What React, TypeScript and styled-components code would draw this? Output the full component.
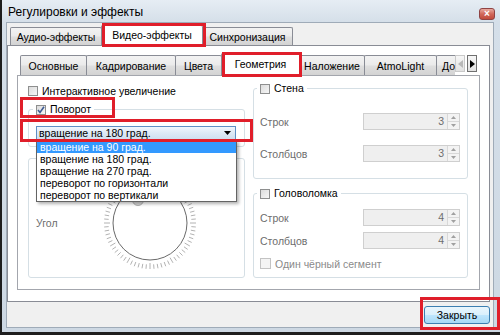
import styled, { createGlobalStyle } from "styled-components";

const GlobalStyle = createGlobalStyle`
  html, body { margin: 0; padding: 0; background: #fff; }
  body {
    font-family: "Liberation Sans", Arial, sans-serif;
    font-size: 10.5px;
    color: #000;
  }
`;

const Window = styled.div`
  position: relative;
  width: 500px;
  height: 335px;
  box-sizing: border-box;
  background: linear-gradient(#e6edf4, #d5dfe9 22px, #cdd8e3);
  border-left: 2px solid #1e1e1e;
  border-bottom: 3px solid #1e1e1e;
  padding: 0 6px 4px 4px;
  display: flex;
  flex-direction: column;
  overflow: hidden;
`;

const TitleBar = styled.div`
  height: 22px;
  display: flex;
  align-items: flex-start;
  justify-content: space-between;
  padding-left: 2px;
`;

const Title = styled.span`
  font-size: 12px;
  line-height: 22px;
  margin-top: 1px;
`;

const TitleClose = styled.div`
  width: 16px;
  height: 12px;
  margin: 8px -1px 0 0;
  box-sizing: border-box;
  border: 1px solid #8f4343;
  border-radius: 3px;
  background: linear-gradient(#e9a99f, #d0675a 50%, #c24a3b);
  color: #fff;
  font-size: 10px;
  font-weight: bold;
  line-height: 10px;
  text-align: center;
`;

const Client = styled.div`
  flex: 1;
  background: #f0f0f0;
  border: 1px solid #9fabb8;
  padding: 2px 3px 0 0;
  display: flex;
  flex-direction: column;
`;

const TabStrip = styled.div<{ $h: number; $pl: number }>`
  position: relative;
  z-index: 1;
  height: ${(p) => p.$h}px;
  margin-bottom: -1px;
  padding-left: ${(p) => p.$pl}px;
  display: flex;
  align-items: flex-start;
`;

const Tab = styled.div<{ $w?: number; $active?: boolean; $h: number }>`
  position: relative;
  box-sizing: border-box;
  width: ${(p) => (p.$w ? `${p.$w}px` : "auto")};
  padding-left: ${(p) => (p.$w ? 0 : 5)}px;
  padding-right: ${(p) => (p.$w ? 0 : 5)}px;
  flex: none;
  height: ${(p) => (p.$active ? p.$h : p.$h - 3)}px;
  margin-top: ${(p) => (p.$active ? 0 : 2)}px;
  margin-left: -1px;
  border: 1px solid #898c95;
  border-bottom: none;
  border-radius: 2px 2px 0 0;
  background: ${(p) =>
    p.$active
      ? "#fff"
      : "linear-gradient(#f3f3f3, #ebebeb 45%, #dedede 55%, #d3d3d3)"};
  z-index: ${(p) => (p.$active ? 2 : 1)};
  display: flex;
  align-items: center;
  justify-content: center;
  white-space: nowrap;
  padding-bottom: ${(p) => (p.$active ? 2 : 0)}px;

  &:first-child { margin-left: 0; }
`;

const OuterPane = styled.div`
  height: 257px;
  box-sizing: border-box;
  background: #fff;
  border: 1px solid #898c95;
  padding: 7px 9px 11px 9px;
  display: flex;
  flex-direction: column;
`;

const TabList = styled.div`
  width: 435px;
  height: 23px;
  overflow: hidden;
  display: flex;
  align-items: flex-start;
`;

const ScrollArrows = styled.div`
  display: flex;
  gap: 2px;
  margin-top: 2px;
`;

const ArrowBtn = styled.div<{ $dim?: boolean }>`
  width: 10px;
  height: 17px;
  box-sizing: border-box;
  border: 1px solid ${(p) => (p.$dim ? "#c9c9c9" : "#707070")};
  background: linear-gradient(#f7f7f7, #e2e2e2);
  display: flex;
  align-items: center;
  justify-content: center;
`;

const InnerPane = styled.div`
  height: 215px;
  box-sizing: border-box;
  border: 1px solid #a3a6ad;
  background: #fff;
  display: flex;
  gap: 8px;
  padding: 0 11px 0 10px;
`;

const Column = styled.div<{ $w: number; $pt: number }>`
  width: ${(p) => p.$w}px;
  padding-top: ${(p) => p.$pt}px;
  display: flex;
  flex-direction: column;
`;

const CheckRow = styled.div<{ $disabled?: boolean; $mt?: number }>`
  height: 13px;
  margin-top: ${(p) => p.$mt ?? 0}px;
  display: flex;
  align-items: center;
  gap: 4px;
  color: ${(p) => (p.$disabled ? "#8a8a8a" : "#000")};
  white-space: nowrap;
`;

const Box = styled.span<{ $size?: number; $disabled?: boolean }>`
  position: relative;
  width: ${(p) => p.$size ?? 10}px;
  height: ${(p) => p.$size ?? 10}px;
  box-sizing: border-box;
  flex: none;
  border: 1px solid ${(p) => (p.$disabled ? "#c3c3c3" : "#8e8f8f")};
  background: ${(p) =>
    p.$disabled ? "#f4f4f4" : "linear-gradient(135deg, #dcdcdc, #f6f6f6)"};
`;

const Group = styled.fieldset<{ $mt: number; $pt: number; $pb: number; $pl?: number; $pr?: number }>`
  margin: ${(p) => p.$mt}px 0 0 0;
  min-width: 0;
  border: 1px solid #d5dfe5;
  border-radius: 3px;
  padding: ${(p) => p.$pt}px ${(p) => p.$pr ?? 7}px ${(p) => p.$pb}px ${(p) => p.$pl ?? 7}px;
  display: flex;
  flex-direction: column;
`;

const Legend = styled.legend`
  padding: 0 3px;
  margin-left: -3px;
  line-height: 13px;
`;

const ComboWrap = styled.div`
  position: relative;
  width: 200px;
`;

const Combo = styled.div`
  height: 14px;
  box-sizing: border-box;
  border: 1px solid #5e8fc4;
  background: linear-gradient(#f1f7fd, #dde9f5 50%, #cfdfef);
  display: flex;
  align-items: center;
  justify-content: space-between;
  padding: 0 4px 0 2px;
`;

const DropList = styled.div`
  position: absolute;
  left: 0;
  top: 14px;
  width: 201px;
  box-sizing: border-box;
  border: 1px solid #646464;
  background: #fff;
  box-shadow: 2px 2px 3px rgba(0, 0, 0, 0.3);
  z-index: 5;
`;

const DropItem = styled.div<{ $sel?: boolean }>`
  height: 12px;
  line-height: 12px;
  padding-left: 3px;
  background: ${(p) => (p.$sel ? "#3399ff" : "transparent")};
  color: ${(p) => (p.$sel ? "#fff" : "#000")};
  white-space: nowrap;
`;

const AngleGroup = styled.fieldset`
  margin: 11px 0 0 0;
  height: 120px;
  box-sizing: border-box;
  min-width: 0;
  border: 1px solid #d5dfe5;
  border-radius: 3px;
  padding: 16px 0 0 7px;
  display: flex;
  align-items: center;
`;

const DimLabel = styled.span<{ $w?: number }>`
  color: #6d6d6d;
  width: ${(p) => (p.$w ? `${p.$w}px` : "auto")};
  flex: none;
`;

const FieldRow = styled.div<{ $mt: number }>`
  margin-top: ${(p) => p.$mt}px;
  height: 17px;
  display: flex;
  align-items: center;
  justify-content: space-between;
`;

const Spin = styled.div`
  width: 97px;
  height: 17px;
  box-sizing: border-box;
  border: 1px solid #cfcfcf;
  background: #efefef;
  display: flex;
`;

const SpinValue = styled.span`
  flex: 1;
  text-align: right;
  line-height: 15px;
  padding-right: 3px;
  color: #6d6d6d;
`;

const SpinBtns = styled.div`
  width: 11px;
  display: flex;
  flex-direction: column;
  border-left: 1px solid #d8d8d8;
`;

const SpinBtn = styled.div`
  flex: 1;
  display: flex;
  align-items: center;
  justify-content: center;
  background: #f3f3f3;
  & + & { border-top: 1px solid #d8d8d8; }
`;

const ButtonRow = styled.div`
  flex: 1;
  display: flex;
  justify-content: flex-end;
  align-items: flex-start;
  padding-top: 4px;
`;

const PushButton = styled.div`
  width: 66px;
  height: 18px;
  box-sizing: border-box;
  border: 1px solid #3c7fb1;
  border-radius: 3px;
  background: linear-gradient(#eaf6fd, #d9f0fc 50%, #bee6fd 51%, #a7d9f5);
  display: flex;
  align-items: center;
  justify-content: center;
`;

const Highlight = styled.div<{ $x: number; $y: number; $w: number; $h: number }>`
  position: absolute;
  left: ${(p) => p.$x}px;
  top: ${(p) => p.$y}px;
  width: ${(p) => p.$w}px;
  height: ${(p) => p.$h}px;
  box-sizing: border-box;
  border: 3px solid #e01e2a;
  z-index: 10;
  pointer-events: none;
`;

const Tri = ({ dir, color = "#000", w = 7, h = 4 }: { dir: "down" | "up" | "left" | "right"; color?: string; w?: number; h?: number }) => {
  const pts = {
    down: `0,0 ${w},0 ${w / 2},${h}`,
    up: `0,${h} ${w},${h} ${w / 2},0`,
    left: `${h},0 ${h},${w} 0,${w / 2}`,
    right: `0,0 0,${w} ${h},${w / 2}`,
  }[dir];
  const vw = dir === "left" || dir === "right" ? h : w;
  const vh = dir === "left" || dir === "right" ? w : h;
  return (
    <svg width={vw} height={vh} viewBox={`0 0 ${vw} ${vh}`}>
      <polygon points={pts} fill={color} />
    </svg>
  );
};

const Check = () => (
  <svg width="10" height="10" viewBox="0 0 10 10" style={{ position: "absolute", left: -1, top: -1 }}>
    <path d="M2 5 L4 7.5 L8 1.8" fill="none" stroke="#3d5b94" strokeWidth="1.6" />
  </svg>
);

const Dial = () => {
  const ticks = [];
  for (let i = 0; i < 72; i++) {
    const a = (i * 5 * Math.PI) / 180;
    const long = i % 6 === 0;
    const r1 = long ? 40 : 41.5;
    const r2 = 46;
    ticks.push(
      <line
        key={i}
        x1={48 + r1 * Math.cos(a)}
        y1={48 + r1 * Math.sin(a)}
        x2={48 + r2 * Math.cos(a)}
        y2={48 + r2 * Math.sin(a)}
        stroke="#a9a9a9"
        strokeWidth="0.9"
      />
    );
  }
  return (
    <svg width="96" height="96" viewBox="0 0 96 96">
      {ticks}
      <circle cx="48" cy="48" r="37" fill="#fff" stroke="#6a6a6a" strokeWidth="1" />
      <circle cx="36" cy="25" r="5.5" fill="#d8d8d8" stroke="#b0b0b0" strokeWidth="1" />
    </svg>
  );
};

const outerTabs = [
  { label: "Аудио-эффекты", w: 92 },
  { label: "Видео-эффекты", w: 102, active: true },
  { label: "Синхронизация", w: 91 },
];

const innerTabs = [
  { label: "Основные", w: 67 },
  { label: "Кадрирование", w: 90 },
  { label: "Цвета", w: 47 },
  { label: "Геометрия", w: 79, active: true },
  { label: "Наложение", w: 66 },
  { label: "AtmoLight", w: 73 },
  { label: "Дополнительно" },
];

const rotations = [
  "вращение на 90 град.",
  "вращение на 180 град.",
  "вращение на 270 град.",
  "переворот по горизонтали",
  "переворот по вертикали",
];

const SpinField = ({ label, value, mt }: { label: string; value: string; mt: number }) => (
  <FieldRow $mt={mt}>
    <DimLabel>{label}</DimLabel>
    <Spin>
      <SpinValue>{value}</SpinValue>
      <SpinBtns>
        <SpinBtn><Tri dir="up" color="#a0a0a0" w={5} h={3} /></SpinBtn>
        <SpinBtn><Tri dir="down" color="#a0a0a0" w={5} h={3} /></SpinBtn>
      </SpinBtns>
    </Spin>
  </FieldRow>
);

export default function App() {
  return (
    <>
      <GlobalStyle />
      <Window>
        <TitleBar>
          <Title>Регулировки и эффекты</Title>
          <TitleClose>×</TitleClose>
        </TitleBar>
        <Client>
          <TabStrip $h={21} $pl={3}>
            {outerTabs.map((t) => (
              <Tab key={t.label} $w={t.w} $h={21} $active={t.active}>{t.label}</Tab>
            ))}
          </TabStrip>
          <OuterPane>
            <TabStrip $h={23} $pl={3}>
              <TabList>
                {innerTabs.map((t) => (
                  <Tab key={t.label} $w={t.w} $h={23} $active={t.active}>{t.label}</Tab>
                ))}
              </TabList>
              <ScrollArrows>
                <ArrowBtn $dim><Tri dir="left" color="#b8b8b8" w={8} h={5} /></ArrowBtn>
                <ArrowBtn><Tri dir="right" w={8} h={5} /></ArrowBtn>
              </ScrollArrows>
            </TabStrip>
            <InnerPane>
              <Column $w={217} $pt={8}>
                <CheckRow>
                  <Box />
                  Интерактивное увеличение
                </CheckRow>
                <Group $mt={6} $pt={10} $pb={6}>
                  <Legend>
                    <CheckRow>
                      <Box><Check /></Box>
                      Поворот
                    </CheckRow>
                  </Legend>
                  <ComboWrap>
                    <Combo>
                      <span>вращение на 180 град.</span>
                      <Tri dir="down" />
                    </Combo>
                    <DropList>
                      {rotations.map((r, i) => (
                        <DropItem key={r} $sel={i === 0}>{r}</DropItem>
                      ))}
                    </DropList>
                  </ComboWrap>
                </Group>
                <AngleGroup>
                  <DimLabel $w={66}>Угол</DimLabel>
                  <Dial />
                </AngleGroup>
              </Column>
              <Column $w={215} $pt={6}>
                <Group $mt={0} $pt={18} $pb={16} $pl={6} $pr={7}>
                  <Legend>
                    <CheckRow>
                      <Box />
                      Стена
                    </CheckRow>
                  </Legend>
                  <SpinField label="Строк" value="3" mt={0} />
                  <SpinField label="Столбцов" value="3" mt={15} />
                </Group>
                <Group $mt={8} $pt={9} $pb={7} $pl={6} $pr={7}>
                  <Legend>
                    <CheckRow>
                      <Box />
                      Головоломка
                    </CheckRow>
                  </Legend>
                  <SpinField label="Строк" value="4" mt={0} />
                  <SpinField label="Столбцов" value="4" mt={6} />
                  <CheckRow $disabled $mt={8}>
                    <Box $size={11} $disabled />
                    Один чёрный сегмент
                  </CheckRow>
                </Group>
              </Column>
            </InnerPane>
          </OuterPane>
          <ButtonRow>
            <PushButton>Закрыть</PushButton>
          </ButtonRow>
        </Client>
        <Highlight $x={100} $y={23} $w={104} $h={24} />
        <Highlight $x={220} $y={52} $w={80} $h={25} />
        <Highlight $x={18} $y={97} $w={95} $h={21} />
        <Highlight $x={18} $y={119} $w={233} $h={23} />
        <Highlight $x={418} $y={297} $w={80} $h={33} />
      </Window>
    </>
  );
}
